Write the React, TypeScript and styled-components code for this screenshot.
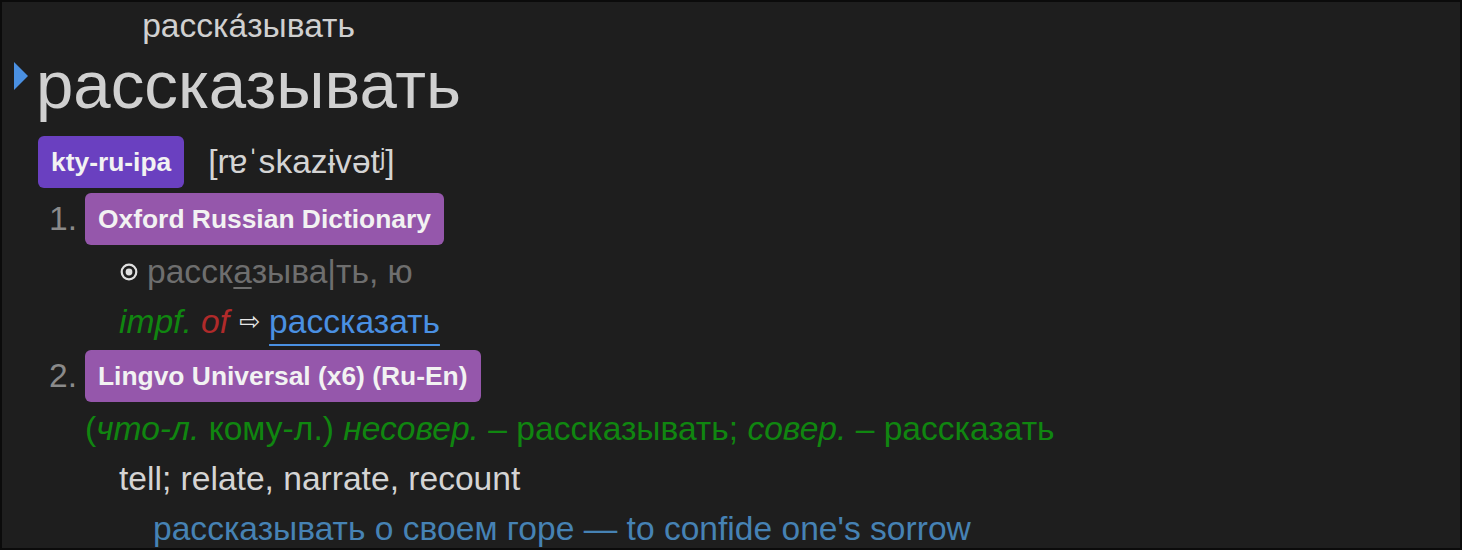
import React from "react";
import styled, { createGlobalStyle } from "styled-components";

const GlobalStyle = createGlobalStyle`
    html, body {
        margin: 0;
        padding: 0;
        background: #1e1e1e;
    }
    * {
        box-sizing: border-box;
    }
`;

const Page = styled.div`
    width: 1462px;
    height: 550px;
    overflow: hidden;
    background: #1e1e1e;
    border: 2px solid #0b0b0b;
    font-family: "Liberation Sans", Arial, sans-serif;
    color: #d4d4d4;
`;

const Header = styled.div`
    display: flex;
    flex-direction: row;
    align-items: flex-start;
`;

const Toggle = styled.span`
    width: 0;
    height: 0;
    margin: 60px 8px 0 12px;
    border-top: 14px solid transparent;
    border-bottom: 14px solid transparent;
    border-left: 14px solid #4a90e2;
`;

const Headword = styled.div`
    display: flex;
    flex-direction: column;
    align-items: center;
`;

const Reading = styled.div`
    font-size: 33.6px;
    line-height: 48px;
    color: #d0d0d0;
`;

const Word = styled.div`
    font-size: 67.2px;
    line-height: 70px;
    margin-bottom: 4px;
    color: #d0d0d0;
`;

const TagRow = styled.div<{ $top?: number }>`
    display: flex;
    flex-direction: row;
    align-items: center;
    padding-left: 36px;
    margin-top: ${p => p.$top ?? 0}px;
`;

const Tag = styled.span<{ $tone: string }>`
    display: inline-block;
    background: ${p => p.$tone};
    color: #f2f2f2;
    font-weight: bold;
    font-size: 26.4px;
    line-height: 30px;
    padding: 11px 13px;
    border-radius: 6px;
`;

const Ipa = styled.span`
    margin-left: 24px;
    font-size: 33.6px;
    color: #d4d4d4;
`;

const ItemHead = styled.div<{ $top: number }>`
    display: flex;
    flex-direction: row;
    align-items: center;
    margin: ${p => p.$top}px 0 2px 36px;
`;

const Num = styled.span`
    width: 47px;
    padding-right: 8px;
    text-align: right;
    font-size: 33.6px;
    color: #8a8a8a;
`;

const Line = styled.div<{ $indent: number; $color?: string }>`
    font-size: 33.6px;
    line-height: 50px;
    height: 50px;
    white-space: nowrap;
    padding-left: ${p => p.$indent}px;
    color: ${p => p.$color ?? "#d4d4d4"};
    display: flex;
    align-items: center;
`;

const Bullet = styled.svg`
    width: 18px;
    height: 18px;
    margin: 0 9px 0 1px;
    flex-shrink: 0;
`;

const Forms = styled.span`
    color: #6e6e6e;
`;

const Stress = styled.span`
    text-decoration: underline;
    text-decoration-thickness: 2px;
    text-underline-offset: 4px;
`;

const Em = styled.i<{ $color?: string }>`
    color: ${p => p.$color ?? "inherit"};
`;

const Arrow = styled.span`
    font-family: "DejaVu Sans", sans-serif;
    font-size: 25px;
    color: #e6e6e6;
    margin: 0 9px 0 10px;
`;

const Ref = styled.a`
    color: #4a90e2;
    text-decoration: underline;
    text-decoration-thickness: 2px;
    text-underline-offset: 11px;
`;

const Row = styled.span`
    white-space: pre;
`;

const App: React.FC = (): React.ReactElement => {
    return (
        <Page>
            <GlobalStyle />
            <Header>
                <Toggle />
                <Headword>
                    <Reading>расска́зывать</Reading>
                    <Word>рассказывать</Word>
                </Headword>
            </Header>

            <TagRow $top={12}>
                <Tag $tone="#6a40c0">kty-ru-ipa</Tag>
                <Ipa>[rɐˈskazɨvətʲ]</Ipa>
            </TagRow>

            <ItemHead $top={5}>
                <Num>1.</Num>
                <Tag $tone="#9557ab">Oxford Russian Dictionary</Tag>
            </ItemHead>
            <Line $indent={117}>
                <Bullet viewBox="0 0 18 18">
                    <circle cx="9" cy="9" r="7.3" fill="none" stroke="#e0e0e0" strokeWidth="2.2" />
                    <circle cx="9" cy="9" r="3.4" fill="#e0e0e0" />
                </Bullet>
                <Forms>
                    расск<Stress>а</Stress>зыва|ть, ю
                </Forms>
            </Line>
            <Line $indent={117}>
                <Row>
                    <Em $color="#108610">impf.</Em> <Em $color="#b02a2a">of</Em>
                </Row>
                <Arrow>⇨</Arrow>
                <Ref>рассказать</Ref>
            </Line>

            <ItemHead $top={3}>
                <Num>2.</Num>
                <Tag $tone="#9557ab">Lingvo Universal (x6) (Ru-En)</Tag>
            </ItemHead>
            <Line $indent={83} $color="#108610">
                <Row>
                    (<Em>что-л.</Em> кому-л.) <Em>несовер.</Em> – рассказывать; <Em>совер.</Em> – рассказать
                </Row>
            </Line>
            <Line $indent={117}>tell; relate, narrate, recount</Line>
            <Line $indent={151} $color="#4682b4">
                рассказывать о своем горе — to confide one's sorrow
            </Line>
        </Page>
    );
};

export default App;
